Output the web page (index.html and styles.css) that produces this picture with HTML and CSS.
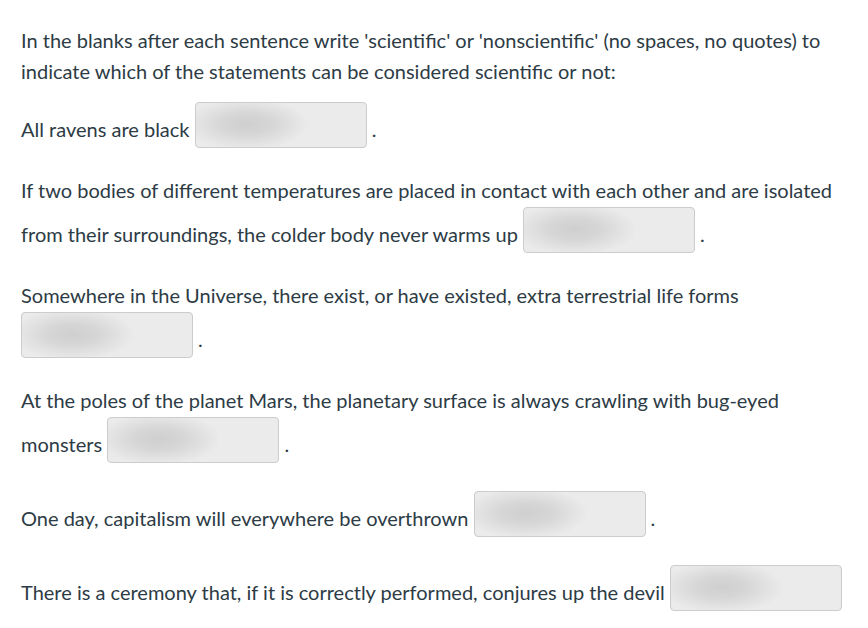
FILE: index.html
```html
<!DOCTYPE html>
<html lang="en">
<head>
    <meta charset="UTF-8">
    <meta name="viewport" content="width=device-width, initial-scale=1.0">
    <title>Scientific or not</title>
    <link rel="stylesheet" href="styles.css">
</head>
<body>
    <div class="question">
        <p>In the blanks after each sentence write 'scientific' or 'nonscientific' (no spaces, no quotes) to indicate which of the statements can be considered scientific or not:</p>
        <p>All ravens are black <input type="text" class="blank" aria-label="answer 1"> .</p>
        <p>If two bodies of different temperatures are placed in contact with each other and are isolated from their surroundings, the colder body never warms up <input type="text" class="blank" aria-label="answer 2"> .</p>
        <p>Somewhere in the Universe, there exist, or have existed, extra terrestrial life forms <input type="text" class="blank" aria-label="answer 3"> .</p>
        <p>At the poles of the planet Mars, the planetary surface is always crawling with bug-eyed monsters <input type="text" class="blank" aria-label="answer 4"> .</p>
        <p>One day, capitalism will everywhere be overthrown <input type="text" class="blank" aria-label="answer 5"> .</p>
        <p>There is a ceremony that, if it is correctly performed, conjures up the devil <input type="text" class="blank" aria-label="answer 6"> .</p>
    </div>
</body>
</html>
```
FILE: styles.css
```css
body {
    margin: 0;
    background: #fff;
    font-family: Lato, "Open Sans", sans-serif;
    color: #2d3b45;
}
.question {
    padding: 11px 24px 0 21px;
    font-size: 20px;
    line-height: 31px;
}
.question p {
    margin: 14px 0;
}
.blank {
    box-sizing: border-box;
    width: 172px;
    height: 46px;
    margin: 1px 0 13px;
    padding: 0 8px;
    border: 1px solid #cccccc;
    border-radius: 4px;
    font-family: inherit;
    font-size: 16px;
    vertical-align: 5px;
    background-color: #ebebeb;
    background-image: radial-gradient(ellipse 62px 26px at 30% 48%, #cfcfcf 0%, #d6d6d6 40%, rgba(235,235,235,0) 100%);
}
```
